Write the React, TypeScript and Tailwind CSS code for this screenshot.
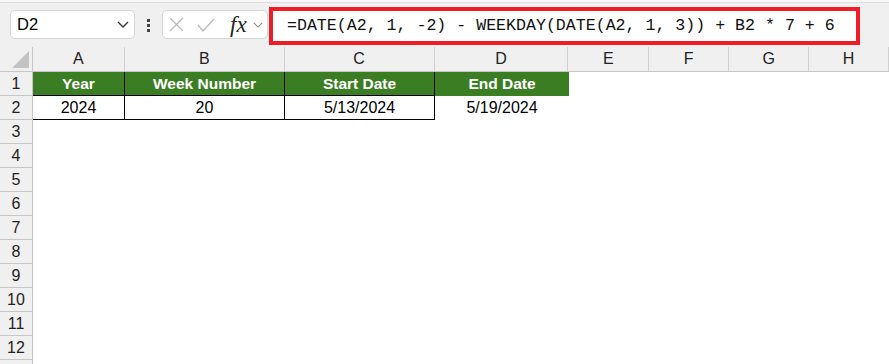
import React from "react";

const cols = [
  { l: "A", w: 92 },
  { l: "B", w: 160 },
  { l: "C", w: 150 },
  { l: "D", w: 134 },
  { l: "E", w: 81 },
  { l: "F", w: 80 },
  { l: "G", w: 80 },
  { l: "H", w: 80 },
];

const sans = { fontFamily: '"Liberation Sans", Arial, sans-serif' };

function Chevron({ className }: { className?: string }) {
  return (
    <svg className={className} viewBox="0 0 12 7" fill="none" stroke="currentColor" strokeWidth="1.3">
      <path d="M1 1l5 5 5-5" />
    </svg>
  );
}

export default function App() {
  const rows = Array.from({ length: 13 }, (_, i) => i + 1);
  return (
    <div className="w-[889px] h-[364px] overflow-hidden bg-white" style={sans}>
      {/* toolbar */}
      <div className="h-[47px] bg-[#f0f0f0] flex flex-col">
        <div className="h-[3px] bg-[#f7f7f7] border-b border-[#dcdcdc]" />
        <div className="flex items-start">
          <div className="mt-[7px] ml-[10px] w-[125px] h-[29px] bg-white border border-[#d6d6d6] rounded-[5px] flex items-center justify-between pl-[6px] pr-[5px]">
            <span className="text-[16.5px] text-black">D2</span>
            <Chevron className="w-[12px] h-[7px] text-[#333]" />
          </div>
          <div className="mt-[16px] ml-[12px] w-[3px] flex flex-col gap-[2px]">
            <div className="w-[3px] h-[3px] bg-[#444]" />
            <div className="w-[3px] h-[3px] bg-[#444]" />
            <div className="w-[3px] h-[3px] bg-[#444]" />
          </div>
          <div className="mt-[7px] ml-[12px] w-[106px] h-[29px] bg-white border border-[#d6d6d6] rounded-[5px] flex items-center pl-[6px]">
            <svg className="w-[15px] h-[15px] text-[#b8b8b8]" viewBox="0 0 15 15" stroke="currentColor" strokeWidth="1.2">
              <path d="M1 1l13 13M14 1L1 14" />
            </svg>
            <svg className="ml-[13px] w-[18px] h-[14px] text-[#b8b8b8]" viewBox="0 0 18 14" fill="none" stroke="currentColor" strokeWidth="1.2">
              <path d="M1 7l5 6L17 1" />
            </svg>
            <span
              className="ml-[15px] text-[23px] italic text-[#222] leading-none"
              style={{ fontFamily: '"Liberation Serif", "Times New Roman", serif' }}
            >
              fx
            </span>
            <Chevron className="ml-[6px] w-[10px] h-[6px] text-[#888]" />
          </div>
          <div className="mt-[4px] ml-[1px] w-[591px] h-[38px] border-[4px] border-[#ee1c25] bg-white flex items-center pl-[14px]">
            <span
              className="text-[16.6px] text-[#111] whitespace-pre"
              style={{ fontFamily: '"Liberation Mono", "DejaVu Sans Mono", monospace' }}
            >
              =DATE(A2, 1, -2) - WEEKDAY(DATE(A2, 1, 3)) + B2 * 7 + 6
            </span>
          </div>
        </div>
      </div>

      {/* column headers */}
      <div className="flex h-[25px] bg-[#f0f0f0] border-b border-[#c6c6c6]">
        <div className="relative w-[33px] border-r border-[#c6c6c6]">
          <svg className="absolute right-[3px] bottom-[3px] w-[17px] h-[17px]" viewBox="0 0 17 17">
            <path d="M17 0V17H0Z" fill="#c3c3c3" />
          </svg>
        </div>
        {cols.map((c) => (
          <div
            key={c.l}
            className="border-r border-[#d0d0d0] flex items-center justify-center text-[16px] text-[#222]"
            style={{ width: c.w }}
          >
            {c.l}
          </div>
        ))}
      </div>

      {/* rows */}
      {rows.map((r) => (
        <div key={r} className="flex h-[24px]">
          <div className="w-[33px] shrink-0 bg-[#f0f0f0] border-r border-b border-[#c6c6c6] flex items-center justify-center text-[16px] text-[#222]">
            {r <= 12 ? r : ""}
          </div>
          {r === 1 && (
            <>
              <div className="w-[92px] bg-[#3b7d23] border-r border-b border-black flex items-center justify-center text-white font-bold text-[15.5px]">Year</div>
              <div className="w-[160px] bg-[#3b7d23] border-r border-b border-black flex items-center justify-center text-white font-bold text-[15.5px]">Week Number</div>
              <div className="w-[150px] bg-[#3b7d23] border-r border-b border-black flex items-center justify-center text-white font-bold text-[15.5px]">Start Date</div>
              <div className="w-[134px] bg-[#3b7d23] border-b border-[#3b7d23] flex items-center justify-center text-white font-bold text-[15.5px]">End Date</div>
            </>
          )}
          {r === 2 && (
            <>
              <div className="w-[92px] border-r border-b border-black flex items-center justify-center text-black text-[16px]">2024</div>
              <div className="w-[160px] border-r border-b border-black flex items-center justify-center text-black text-[16px]">20</div>
              <div className="w-[150px] border-r border-b border-black flex items-center justify-center text-black text-[16px]">5/13/2024</div>
              <div className="w-[134px] flex items-center justify-center text-black text-[16px]">5/19/2024</div>
            </>
          )}
        </div>
      ))}
    </div>
  );
}
